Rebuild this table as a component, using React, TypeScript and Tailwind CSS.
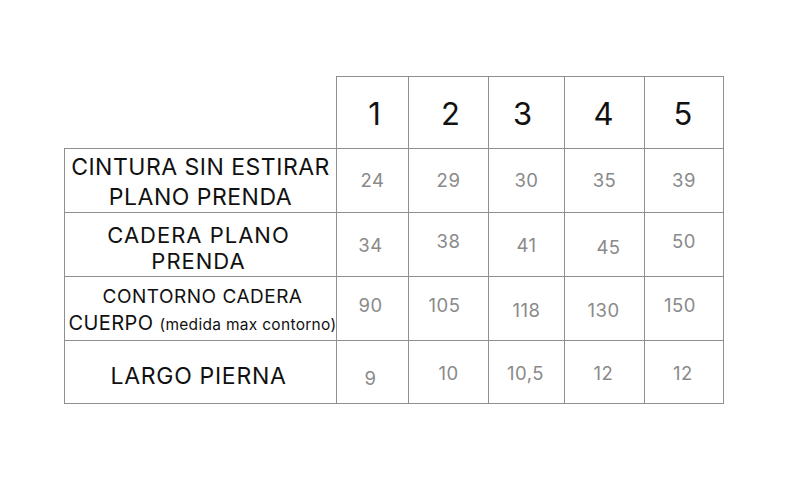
import React from "react";

const line = "border-[#8f8f8f]";

type V = { t: string; c: string };

const rows: { label: React.ReactNode; vals: V[] }[] = [
  {
    label: (
      <div className="text-center text-[23px] leading-[30px] tracking-[0.5px] text-[#111] translate-y-[1px]">
        <div>CINTURA SIN ESTIRAR</div>
        <div>PLANO PRENDA</div>
      </div>
    ),
    vals: [
      { t: "24", c: "" },
      { t: "29", c: "" },
      { t: "30", c: "" },
      { t: "35", c: "" },
      { t: "39", c: "" },
    ],
  },
  {
    label: (
      <div className="text-center text-[22px] leading-[26px] tracking-[1px] text-[#111] translate-y-[3px] -translate-x-[2px]">
        <div>CADERA PLANO</div>
        <div>PRENDA</div>
      </div>
    ),
    vals: [
      { t: "34", c: "translate-y-[1px] -translate-x-[2px]" },
      { t: "38", c: "-translate-y-[3px]" },
      { t: "41", c: "translate-y-[1px]" },
      { t: "45", c: "translate-y-[3px] translate-x-[4px]" },
      { t: "50", c: "-translate-y-[3px]" },
    ],
  },
  {
    label: (
      <div className="text-center text-[#111] translate-x-[2px] translate-y-[2px]">
        <div className="text-[19px] leading-[26px] tracking-[0.5px]">CONTORNO CADERA</div>
        <div className="text-[20px] leading-[26px] tracking-[0.4px]">
          CUERPO <span className="text-[15.5px] tracking-[0.3px]">(medida max contorno)</span>
        </div>
      </div>
    ),
    vals: [
      { t: "90", c: "-translate-y-[3px] -translate-x-[2px]" },
      { t: "105", c: "-translate-y-[3px] -translate-x-[4px]" },
      { t: "118", c: "translate-y-[2px]" },
      { t: "130", c: "translate-y-[2px] -translate-x-[1px]" },
      { t: "150", c: "-translate-y-[3px] -translate-x-[4px]" },
    ],
  },
  {
    label: (
      <div className="text-center text-[23px] leading-[30px] tracking-[0.7px] text-[#111] translate-y-[4px] -translate-x-[2px]">
        LARGO PIERNA
      </div>
    ),
    vals: [
      { t: "9", c: "translate-y-[6px] -translate-x-[2px]" },
      { t: "10", c: "translate-y-[1px]" },
      { t: "10,5", c: "translate-y-[1px] -translate-x-[1px]" },
      { t: "12", c: "translate-y-[1px] -translate-x-[1px]" },
      { t: "12", c: "translate-y-[1px] -translate-x-[1px]" },
    ],
  },
];

const headers: V[] = [
  { t: "1", c: "translate-x-[2px] translate-y-[1px]" },
  { t: "2", c: "translate-x-[2px] translate-y-[1px]" },
  { t: "3", c: "-translate-x-[4px] translate-y-[1px]" },
  { t: "4", c: "-translate-x-[1px] translate-y-[1px]" },
  { t: "5", c: "-translate-x-[1px] translate-y-[1px]" },
];

export default function App() {
  return (
    <div
      className="w-[792px] h-[500px] bg-white pl-[64px] pt-[76px]"
      style={{ fontFamily: "Inter, 'Noto Sans', sans-serif" }}
    >
      <div className="grid grid-cols-[272px_72px_80px_76px_80px_80px] grid-rows-[72px_64px_64px_64px_64px] w-[660px]">
        <div />
        {headers.map((h, i) => (
          <div
            key={i}
            className={`flex items-center justify-center border-l border-t ${line} ${i === 4 ? "border-r" : ""}`}
          >
            <span className={`text-[31px] leading-none text-[#111] ${h.c}`}>{h.t}</span>
          </div>
        ))}
        {rows.map((r, ri) => (
          <React.Fragment key={ri}>
            <div
              className={`flex items-center justify-center border-l border-t ${line} ${ri === 3 ? "border-b" : ""}`}
            >
              {r.label}
            </div>
            {r.vals.map((v, vi) => (
              <div
                key={vi}
                className={`flex items-center justify-center border-l border-t ${line} ${vi === 4 ? "border-r" : ""} ${ri === 3 ? "border-b" : ""}`}
              >
                <span className={`text-[18.5px] leading-none tracking-[0.5px] text-[#8a8a8a] ${v.c}`}>{v.t}</span>
              </div>
            ))}
          </React.Fragment>
        ))}
      </div>
    </div>
  );
}
